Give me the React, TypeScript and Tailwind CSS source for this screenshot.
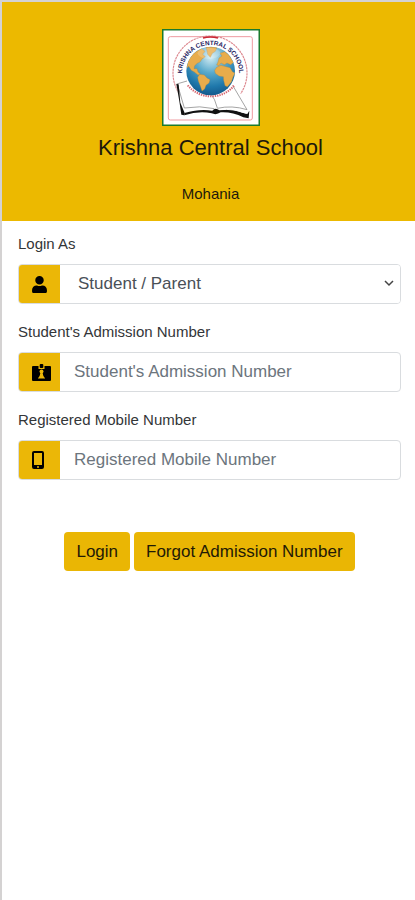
import React, {useState} from "react";
import {FaUser} from "react-icons/fa";

type FieldProps = {
    id: string;
    label: string;
    icon: React.ReactNode;
    children: React.ReactNode;
};

const Field = ({id, label, icon, children}: FieldProps) => (
    <div className="mb-4">
        <label htmlFor={id} className="block mb-2 text-[15px] leading-6 text-[#333638]">
            {label}
        </label>
        <div className="relative flex h-10 overflow-hidden rounded border border-[#d9dcdf] bg-white">
            <span className="flex w-[41px] shrink-0 items-center bg-[#ebb707] pl-3 text-[17px] text-black">
                {icon}
            </span>
            {children}
        </div>
    </div>
);

const BadgeIcon = () => (
    <svg className="h-[17px] w-[19px] ml-px" viewBox="0 0 19 17" fill="none">
        <path d="M1 2 H6.5 V5 H12.5 V2 H18 Q19 2 19 3 V16 Q19 17 18 17 H1 Q0 17 0 16 V3 Q0 2 1 2 Z" fill="#000" />
        <rect x="7.7" y="0" width="3.6" height="4" rx="1" fill="#000" />
        <circle cx="9.5" cy="7.4" r="2" fill="#ebb707" />
        <path d="M8.4 9 H10.6 L11.4 12 L13.2 14.6 H5.8 L7.6 12 Z" fill="#ebb707" />
    </svg>
);

const PhoneIcon = () => (
    <svg className="h-[18px] w-3 ml-px" viewBox="0 0 12 18">
        <path
            d="M2 0 H10 Q12 0 12 2 V16 Q12 18 10 18 H2 Q0 18 0 16 V2 Q0 0 2 0 Z M2 2 V14 H10 V2 Z M6 15 A1 1 0 1 0 6 17 A1 1 0 1 0 6 15 Z"
            fill="#000"
            fillRule="evenodd"
        />
    </svg>
);

const SchoolLogo = () => (
    <svg className="w-[98px] h-[97px]" viewBox="36 25 294 291" role="img" aria-label="School logo">
        <defs>
            <radialGradient id="ocean" cx="0.5" cy="0.22" r="0.8">
                <stop offset="0" stopColor="#d3ecf3" />
                <stop offset="0.4" stopColor="#58a9cb" />
                <stop offset="0.75" stopColor="#1f78ab" />
                <stop offset="1" stopColor="#125688" />
            </radialGradient>
            <clipPath id="globe">
                <circle cx="182" cy="151" r="73" />
            </clipPath>
            <path id="nameArc" d="M97 172 A86 86 0 1 1 267 172" />
        </defs>
        <rect x="38" y="27" width="290" height="287" fill="#fff" stroke="#1b7a2c" strokeWidth="5" />
        <rect x="55" y="48" width="252" height="250" rx="6" fill="none" stroke="#ee9aa0" strokeWidth="3" />
        <path d="M88 219 A111 111 0 1 1 272 219" fill="none" stroke="#dd8990" strokeWidth="3.5" strokeDasharray="7 2" />
        <path d="M159 52 Q181 46 204 52" fill="none" stroke="#c92533" strokeWidth="5" />
        <text fill="#23235f" fontSize="19" fontWeight="bold" fontFamily="Liberation Sans, Arial, sans-serif">
            <textPath href="#nameArc" startOffset="50%" textAnchor="middle">KRISHNA CENTRAL SCHOOL</textPath>
        </text>

        {/* book */}
        <path d="M79 190 L117 181 L248 192 L298 270 L293 292 L202 276 L97 282 Z" fill="#fff" />
        <path d="M80 190 L111 181 M82 190 L103 262 Q150 254 193 264 M180 216 Q196 235 202 262 M202 263 Q246 253 291 267 L248 194" fill="none" stroke="#777" strokeWidth="2" />
        <path d="M79 190 L86 191 L91 246 L104 277 L103 284 L94 282 L88 242 Z" fill="#111" />
        <path d="M103 277 Q150 263 187 270 Q196 259 208 269 Q246 262 276 276 L292 280 L298 270 L296 293 L280 290 Q246 273 212 275 Q199 284 185 278 Q146 270 103 284 Z" fill="#111" />
        <path d="M112 270 Q150 262 186 267 M211 267 Q248 263 290 278" fill="none" stroke="#fff" strokeWidth="3" />

        {/* motto band under the globe */}
        <path d="M113 194 Q144 228 185 227 Q226 226 253 194" fill="none" stroke="#d76670" strokeWidth="6" strokeDasharray="4 3" />
        <circle cx="182" cy="151" r="73" fill="url(#ocean)" />
        <g clipPath="url(#globe)" fill="#e8ac4b" stroke="#a88542" strokeWidth="1">
            <path d="M112 128 Q122 96 155 84 L165 92 L158 101 L166 108 L156 115 L150 124 L142 128 L134 135 L132 144 L141 144 L144 154 L151 160 L144 163 L133 154 L124 149 L116 137 L111 142 Z" />
            <path d="M168 79 L201 80 L196 92 L187 98 L181 110 L173 101 L171 91 Z" />
            <path d="M149 161 L163 163 L171 172 L180 177 L177 187 L168 194 L164 205 L156 211 L151 196 L145 181 L143 170 Z" />
            <path d="M204 124 L207 112 L216 106 L210 98 L224 93 L236 102 L251 125 L242 132 L231 127 L223 132 L213 127 L207 135 L200 133 Z" />
            <path d="M200 140 L213 134 L229 138 L240 141 L248 154 L255 157 L249 169 L244 184 L232 198 L225 195 L221 179 L220 168 L207 166 L196 158 L194 149 Z" />
        </g>
        <ellipse cx="177" cy="98" rx="34" ry="17" fill="#fff" opacity="0.2" />
    </svg>
);

const App = () => {
    const [role, setRole] = useState("student");
    const [admissionNumber, setAdmissionNumber] = useState("");
    const [mobile, setMobile] = useState("");

    const handleLogin = (e: React.FormEvent) => {
        e.preventDefault();
    };

    return (
        <div className="min-h-screen border-l-2 border-t-2 border-[#d4d2d2] bg-white font-['Liberation_Sans',Arial,sans-serif]">
            <header className="flex flex-col items-center bg-[#ecb900] pt-[27px] pb-[15px] pl-1 text-[#1d1a0c]">
                <SchoolLogo />
                <h1 className="mt-2 text-[22px] leading-7">Krishna Central School</h1>
                <p className="mt-5 text-[15px] leading-6">Mohania</p>
            </header>

            <form onSubmit={handleLogin} className="pt-[11px] pr-3.5 pl-4">
                <Field id="role" label="Login As" icon={<FaUser />}>
                    <select
                        id="role"
                        className="min-w-0 flex-1 appearance-none bg-white pr-8 pl-[18px] text-[17px] text-[#495057] outline-none"
                        value={role}
                        onChange={(e) => setRole(e.target.value)}
                    >
                        <option value="student">Student / Parent</option>
                    </select>
                    <svg
                        className="pointer-events-none absolute top-3.5 right-1.5 h-2 w-2.5"
                        viewBox="0 0 10 8"
                        fill="none"
                        stroke="#444"
                        strokeWidth="1.5"
                    >
                        <path d="M1 2 L5 6 L9 2" />
                    </svg>
                </Field>

                <Field id="admission" label="Student's Admission Number" icon={<BadgeIcon />}>
                    <input
                        id="admission"
                        type="text"
                        className="min-w-0 flex-1 px-3.5 text-[17px] text-[#495057] outline-none placeholder:text-[#6c757d]"
                        placeholder="Student's Admission Number"
                        value={admissionNumber}
                        onChange={(e) => setAdmissionNumber(e.target.value)}
                    />
                </Field>

                <Field id="mobile" label="Registered Mobile Number" icon={<PhoneIcon />}>
                    <input
                        id="mobile"
                        type="tel"
                        className="min-w-0 flex-1 px-3.5 text-[17px] text-[#495057] outline-none placeholder:text-[#6c757d]"
                        placeholder="Registered Mobile Number"
                        value={mobile}
                        onChange={(e) => setMobile(e.target.value)}
                    />
                </Field>

                <div className="mt-[52px] flex justify-center gap-1">
                    <button
                        type="submit"
                        className="cursor-pointer rounded bg-[#eab604] px-3 py-1.5 text-[17px] leading-[27px] text-[#1f1a06]"
                    >
                        Login
                    </button>
                    <button
                        type="button"
                        className="cursor-pointer rounded bg-[#eab604] px-3 py-1.5 text-[17px] leading-[27px] text-[#1f1a06]"
                    >
                        Forgot Admission Number
                    </button>
                </div>
            </form>
        </div>
    );
};

export default App;
